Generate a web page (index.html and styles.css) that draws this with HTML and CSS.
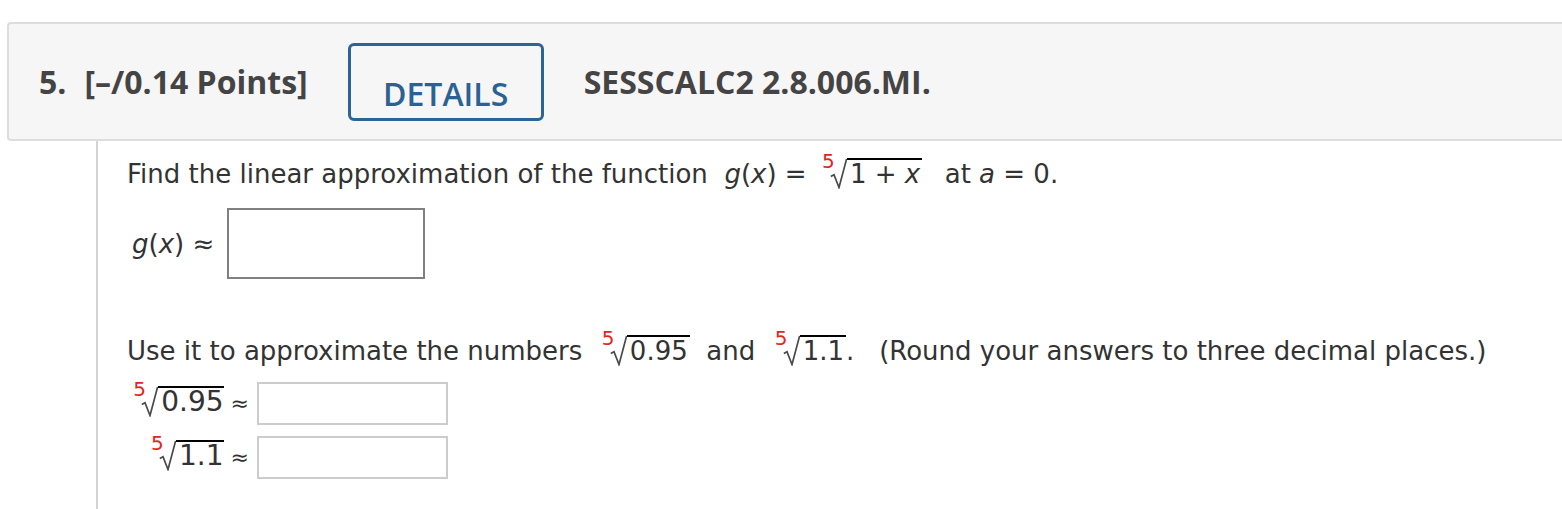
FILE: index.html
```html
<!DOCTYPE html>
<html lang="en">
<head>
<meta charset="utf-8">
<title>Question 5</title>
<link rel="stylesheet" href="styles.css">
</head>
<body>
<div class="question">
  <div class="qhead">
    <span class="qnum">5.</span>
    <span class="qpts">[–/0.14 Points]</span>
    <span class="details">DETAILS</span>
    <span class="qref">SESSCALC2 2.8.006.MI.</span>
  </div>
  <div class="qbody">
    <p class="line">Find the linear approximation of the function&nbsp; <i>g</i>(<i>x</i>) = <span class="root r1"><span class="idx">5</span><svg class="sign" viewBox="0 0 17 31" width="17" height="31"><path d="M0.8 18.5 L4 16.8 L9 29.5 L16.6 1"/></svg><span class="rad">1 + <i>x</i></span></span>&nbsp; at <i>a</i> = 0.</p>
    <div class="ansrow">
      <span class="lbl"><i>g</i>(<i>x</i>) ≈</span>
      <span class="box big"></span>
    </div>
    <p class="line line2">Use it to approximate the numbers&nbsp; <span class="root r2"><span class="idx">5</span><svg class="sign" viewBox="0 0 17 31" width="17" height="31"><path d="M0.8 18.5 L4 16.8 L9 29.5 L16.6 1"/></svg><span class="rad">0.95</span></span>&nbsp;&nbsp;and&nbsp; <span class="root r2"><span class="idx">5</span><svg class="sign" viewBox="0 0 17 31" width="17" height="31"><path d="M0.8 18.5 L4 16.8 L9 29.5 L16.6 1"/></svg><span class="rad">1.1</span></span>.&nbsp;&nbsp; (Round your answers to three decimal places.)</p>
    <div class="grid">
      <span class="glbl"><span class="root"><span class="idx">5</span><svg class="sign" viewBox="0 0 17 31" width="17" height="31"><path d="M0.8 18.5 L4 16.8 L9 29.5 L16.6 1"/></svg><span class="rad">0.95</span></span><span class="approx">≈</span></span>
      <span class="box small"></span>
      <span class="glbl"><span class="root"><span class="idx">5</span><svg class="sign" viewBox="0 0 17 31" width="17" height="31"><path d="M0.8 18.5 L4 16.8 L9 29.5 L16.6 1"/></svg><span class="rad">1.1</span></span><span class="approx">≈</span></span>
      <span class="box small"></span>
    </div>
  </div>
</div>
</body>
</html>
```
FILE: styles.css
```css
html, body {
  margin: 0;
  background: #ffffff;
}
body {
  overflow: hidden;
  font-family: "DejaVu Sans", Verdana, sans-serif;
  color: #333333;
}
.question {
  padding: 22px 0 0 7px;
}
.qhead {
  display: flex;
  align-items: center;
  box-sizing: border-box;
  width: 1600px;
  height: 119px;
  padding-left: 30px;
  background: #f6f6f6;
  border: 2px solid #dddddd;
  border-right: none;
  border-radius: 4px 0 0 4px;
  font-family: "Open Sans", "Liberation Sans", sans-serif;
  font-weight: 700;
  font-size: 32px;
  color: #444444;
}
.qnum {
  margin-right: 18px;
}
.qpts {
  margin-right: 40px;
}
.details {
  box-sizing: border-box;
  width: 196px;
  height: 78px;
  border: 3px solid #2c6496;
  border-radius: 6px;
  padding-top: 32px;
  text-align: center;
  font-weight: 600;
  font-size: 32px;
  line-height: 32px;
  color: #2b6294;
  margin-right: 40px;
}
.qbody {
  margin-left: 89px;
  border-left: 2px solid #d4d4d4;
  padding: 17px 0 0 29px;
  height: 351px;
}
.line {
  margin: 0;
  font-size: 26px;
  line-height: 32px;
  white-space: nowrap;
}
.root {
  display: inline-block;
  position: relative;
  padding-left: 7px;
  white-space: nowrap;
}
.r1 {
  margin-left: 8px;
  margin-right: 6px;
}
.r2 {
  margin-left: 4px;
}
.idx {
  position: absolute;
  left: -1px;
  top: -4px;
  font-size: 20px;
  line-height: 14px;
  color: #e3261d;
}
.sign {
  vertical-align: -6px;
}
.sign path {
  fill: none;
  stroke: #4a4a4a;
  stroke-width: 1.7;
  stroke-linejoin: miter;
}
.rad {
  display: inline-block;
  border-top: 2px solid #000000;
  padding: 1px 2px 0 3px;
  line-height: 26px;
}
.ansrow {
  display: flex;
  align-items: center;
  margin-top: 18px;
  gap: 13px;
}
.lbl {
  font-size: 26px;
  padding-left: 5px;
}
.box {
  display: block;
  box-sizing: border-box;
  background: #ffffff;
}
.big {
  width: 198px;
  height: 71px;
  border: 2px solid #808080;
}
.line2 {
  margin-top: 56px;
}
.grid {
  display: grid;
  grid-template-columns: 122px 191px;
  column-gap: 8px;
  row-gap: 11px;
  margin-top: 15px;
}
.glbl {
  justify-self: end;
  align-self: start;
  padding-top: 4px;
  font-size: 28px;
  line-height: 32px;
  white-space: nowrap;
}
.glbl .rad {
  padding: 1px 0 0 3px;
}
.approx {
  margin-left: 7px;
  font-size: 22px;
}
.small {
  height: 43px;
  border: 2px solid #cccccc;
}
```
